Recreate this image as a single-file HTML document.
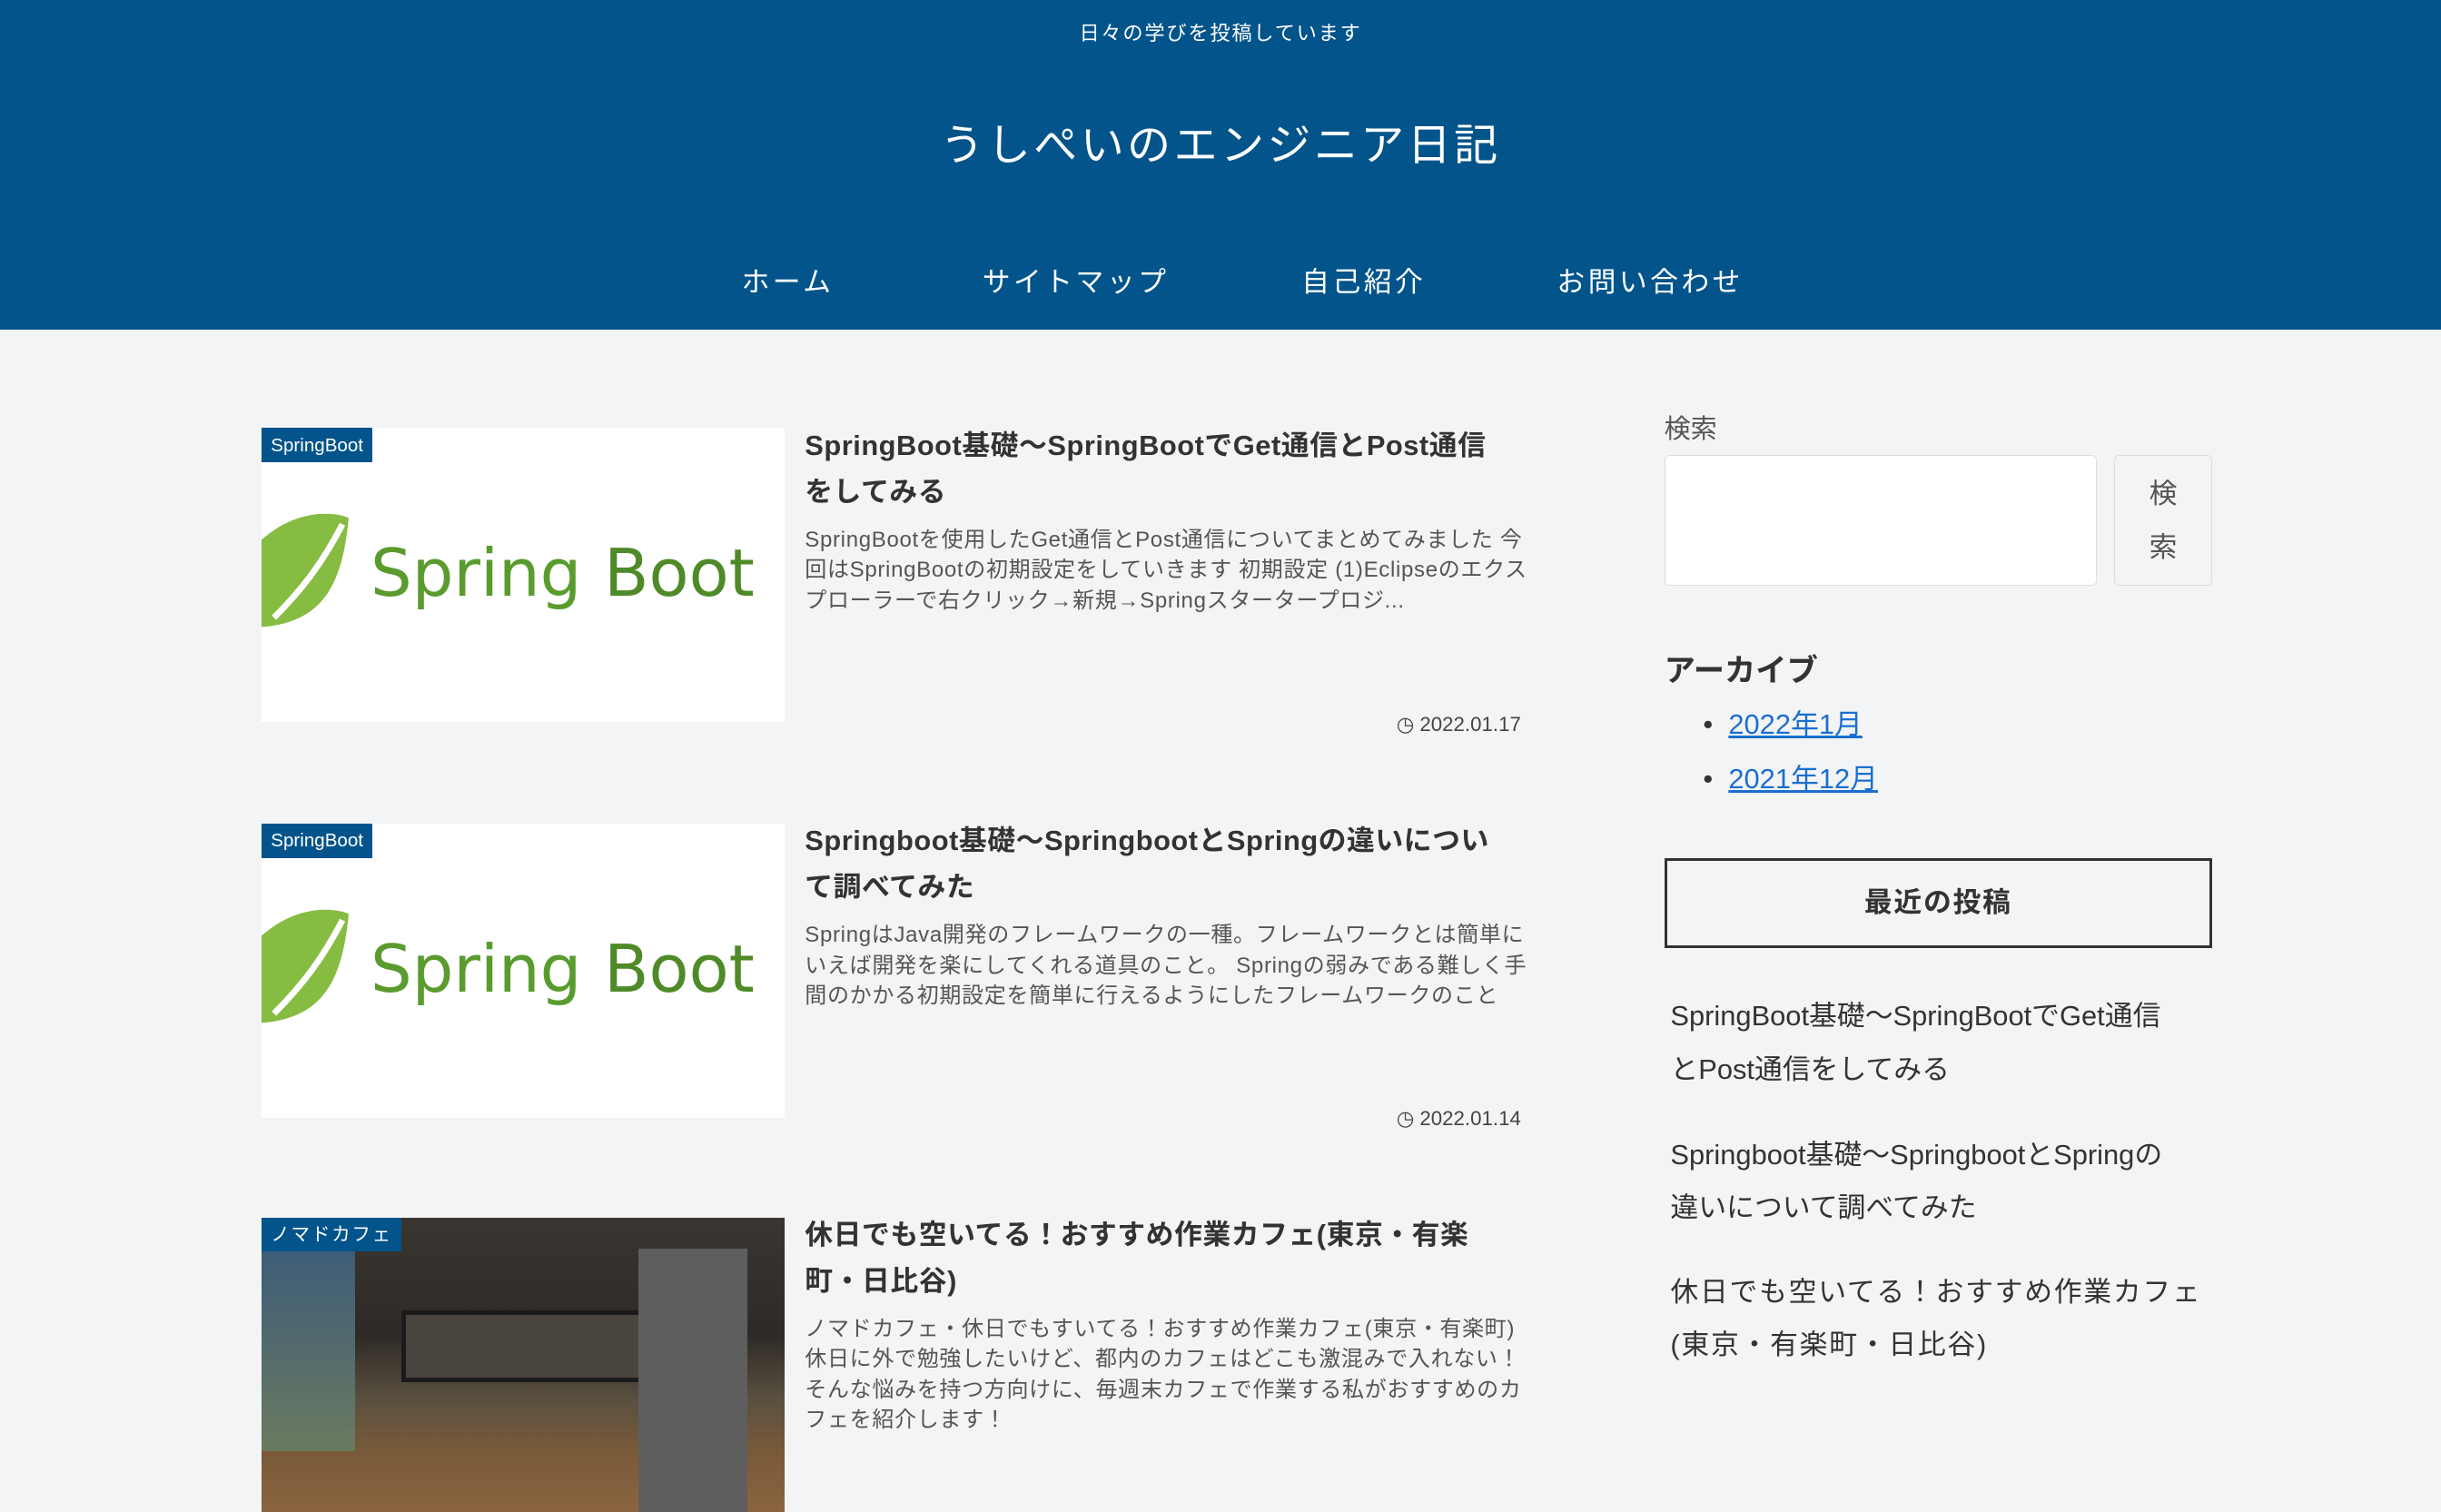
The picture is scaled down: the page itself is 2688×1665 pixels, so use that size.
<!DOCTYPE html>
<html><head><meta charset="utf-8"><style>
html,body{margin:0;padding:0;}
body{width:1568px;height:930px;overflow:hidden;zoom:1.71429;background:#f3f4f5;font-family:"Liberation Sans","Noto Sans CJK JP",sans-serif;color:#333;position:relative;}
.hd{position:absolute;left:0;top:0;width:1568px;height:212px;background:#02548b;color:#fff;}
.ab{position:absolute;white-space:nowrap;}
.tag{font-size:13px;left:0;width:1568px;text-align:center;top:11px;letter-spacing:1px}
.title{font-size:28px;left:0;width:1568px;text-align:center;top:70px;letter-spacing:2px}
.nav{font-size:18px;top:166px;letter-spacing:2px;transform:translateX(-50%)}
.img{position:absolute;left:168px;width:336px;height:189px;background:#fff;overflow:hidden}
.cat{position:absolute;left:0;top:0;background:#02548b;color:#fff;font-size:12px;padding:3px 6px;line-height:16px}
.t{position:absolute;left:517px;width:452px;font-size:18px;font-weight:bold;line-height:30px;color:#333;letter-spacing:0.3px}
.ex{position:absolute;left:517px;width:465px;font-size:14px;line-height:19.5px;color:#555;letter-spacing:0.4px}
.dt{position:absolute;left:870px;width:107px;text-align:right;font-size:13px;color:#444}
a{color:#1a6fd0}
</style></head><body>
<div class="hd">
<div class="ab tag">日々の学びを投稿しています</div>
<div class="ab title">うしぺいのエンジニア日記</div>
<div class="ab nav" style="left:506px">ホーム</div>
<div class="ab nav" style="left:691px">サイトマップ</div>
<div class="ab nav" style="left:876px">自己紹介</div>
<div class="ab nav" style="left:1060px">お問い合わせ</div>
</div>

<div class="img" style="top:275px">
<svg width="336" height="189" style="position:absolute;left:0;top:0"><path d="M0 72 C25 50 50 55 56 58 C52 100 40 125 0 128 Z" fill="#86bc42"/><path d="M8 122 C28 102 40 85 52 62" stroke="#fff" stroke-width="4" fill="none"/><text x="70" y="108" font-family="DejaVu Sans,sans-serif" font-size="42" fill="#5a9b2e">Spring</text><text x="220" y="108" font-family="DejaVu Sans,sans-serif" font-size="42" fill="#4f8a28">Boot</text></svg>
<div class="cat">SpringBoot</div></div>
<div class="t" style="top:271px">SpringBoot基礎～SpringBootでGet通信とPost通信をしてみる</div>
<div class="ex" style="top:337px">SpringBootを使用したGet通信とPost通信についてまとめてみました 今回はSpringBootの初期設定をしていきます 初期設定 (1)Eclipseのエクスプローラーで右クリック→新規→Springスタータープロジ...</div>
<div class="dt" style="top:458px">◷ 2022.01.17</div>

<div class="img" style="top:529px">
<svg width="336" height="189" style="position:absolute;left:0;top:0"><path d="M0 72 C25 50 50 55 56 58 C52 100 40 125 0 128 Z" fill="#86bc42"/><path d="M8 122 C28 102 40 85 52 62" stroke="#fff" stroke-width="4" fill="none"/><text x="70" y="108" font-family="DejaVu Sans,sans-serif" font-size="42" fill="#5a9b2e">Spring</text><text x="220" y="108" font-family="DejaVu Sans,sans-serif" font-size="42" fill="#4f8a28">Boot</text></svg>
<div class="cat">SpringBoot</div></div>
<div class="t" style="top:525px">Springboot基礎～SpringbootとSpringの違いについて調べてみた</div>
<div class="ex" style="top:591px">SpringはJava開発のフレームワークの一種。フレームワークとは簡単にいえば開発を楽にしてくれる道具のこと。 Springの弱みである難しく手間のかかる初期設定を簡単に行えるようにしたフレームワークのこと</div>
<div class="dt" style="top:711px">◷ 2022.01.14</div>

<div class="img" style="top:782px;background:linear-gradient(180deg,#3a3530 0%,#2e2a26 40%,#5a5040 62%,#7a5a38 80%,#8a6440 100%)">
<div style="position:absolute;left:90px;top:60px;width:150px;height:40px;background:#4a443e;border:3px solid #1a1a1a"></div>
<div style="position:absolute;left:0;top:10px;width:60px;height:140px;background:linear-gradient(#3a5a7a,#6a7a60)"></div>
<div style="position:absolute;left:242px;top:20px;width:70px;height:170px;background:#5e5e5e"></div>
<div class="cat" style="letter-spacing:1px">ノマドカフェ</div></div>
<div class="t" style="top:778px">休日でも空いてる！おすすめ作業カフェ(東京・有楽町・日比谷)</div>
<div class="ex" style="top:844px">ノマドカフェ・休日でもすいてる！おすすめ作業カフェ(東京・有楽町) 休日に外で勉強したいけど、都内のカフェはどこも激混みで入れない！ そんな悩みを持つ方向けに、毎週末カフェで作業する私がおすすめのカフェを紹介します！</div>

<div class="ab" style="left:1069px;top:262px;font-size:17px;color:#555">検索</div>
<div class="ab" style="left:1069px;top:292px;width:278px;height:84px;background:#fff;border:1px solid #ddd;border-radius:3px;box-sizing:border-box"></div>
<div class="ab" style="left:1358px;top:292px;width:63px;height:84px;background:#f3f4f5;border:1px solid #ddd;border-radius:3px;box-sizing:border-box;font-size:18px;color:#555;text-align:center;line-height:34px;padding-top:8px;white-space:normal">検<br>索</div>
<div class="ab" style="left:1069px;top:414px;font-size:20px;font-weight:bold;color:#333">アーカイブ</div>
<div class="ab" style="left:1094px;top:448px;font-size:18px;line-height:35px">•&nbsp; <a href="#">2022年1月</a><br>•&nbsp; <a href="#">2021年12月</a></div>
<div class="ab" style="left:1069px;top:551px;width:352px;height:58px;box-sizing:border-box;border:2px solid #333;text-align:center;line-height:54px;font-size:18px;font-weight:bold;color:#333;letter-spacing:1px">最近の投稿</div>
<div class="ab" style="left:1073px;top:636px;width:328px;white-space:normal;font-size:18px;line-height:34px;color:#333">SpringBoot基礎～SpringBootでGet通信とPost通信をしてみる</div>
<div class="ab" style="left:1073px;top:725px;width:328px;white-space:normal;font-size:18px;line-height:34px;color:#333">Springboot基礎～SpringbootとSpringの違いについて調べてみた</div>
<div class="ab" style="left:1073px;top:813px;width:345px;white-space:normal;font-size:18px;line-height:34px;color:#333;letter-spacing:1px">休日でも空いてる！おすすめ作業カフェ(東京・有楽町・日比谷)</div>
</body></html>
